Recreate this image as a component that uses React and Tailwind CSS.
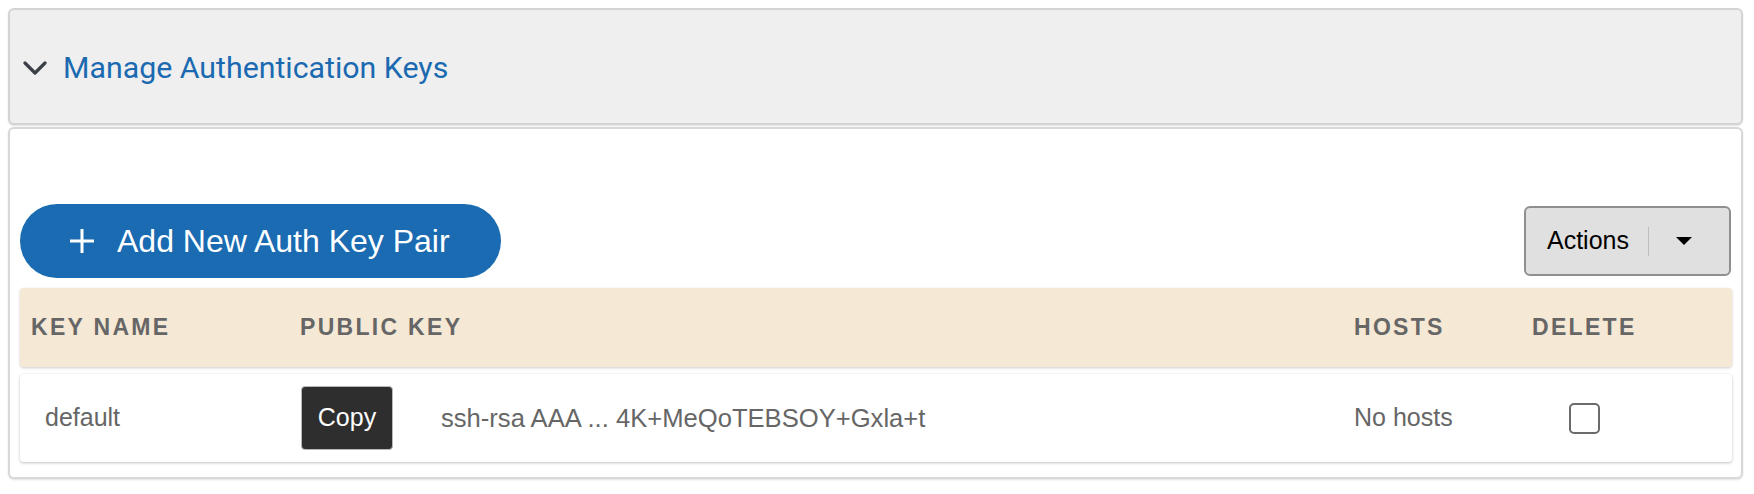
export default function App() {
    return (
        <div className="w-[1754px] h-[494px] bg-white pt-[8px] pl-[8px]" style={{ fontFamily: '"Liberation Sans", Arial, sans-serif' }}>
            {/* Accordion header */}
            <div className="w-[1735px] h-[117px] flex items-center rounded-md border-2 border-[#d4d4d4] bg-[#efefef] shadow-[0_1px_2px_rgba(0,0,0,0.12)]">
                <svg width="24" height="15" viewBox="0 0 24 15" className="ml-[13px] mt-[4px]">
                    <path d="M2 2l10 10L22 2" fill="none" stroke="#3b4046" strokeWidth="3.2" strokeLinecap="round" strokeLinejoin="round" />
                </svg>
                <span className="ml-[16px] mt-[2px] text-[30.3px] text-[#1b6ab1]" style={{ fontFamily: 'Roboto, sans-serif' }}>
                    Manage Authentication Keys
                </span>
            </div>

            {/* Accordion body */}
            <div className="w-[1735px] h-[352px] mt-[2px] rounded-md border-2 border-[#d8d8d8] bg-white shadow-[0_1px_2px_rgba(0,0,0,0.12)] pl-[10px] pr-[9px] pt-[75px]">
                <div className="flex items-center justify-between">
                    <button className="h-[74px] w-[481px] rounded-full bg-[#1a6bb1] flex items-center pl-[50px] text-white text-[32px]">
                        <svg width="24" height="24" viewBox="0 0 24 24" className="mr-[23px]">
                            <path d="M12 0v24M0 12h24" stroke="white" strokeWidth="3" />
                        </svg>
                        Add New Auth Key Pair
                    </button>
                    <button className="h-[70px] w-[207px] mr-px rounded-md border-2 border-[#8f8f8f] bg-[#e0e0e0] flex items-center pl-[21px] text-[25px] text-black">
                        Actions
                        <span className="ml-[19px] w-px h-[29px] bg-[#bdbdbd]" />
                        <svg width="16" height="8" viewBox="0 0 16 8" className="ml-[27px]">
                            <path d="M0 0h16L8 8z" fill="black" />
                        </svg>
                    </button>
                </div>

                {/* Table header */}
                <div className="mt-[10px] h-[79px] flex items-center rounded-sm bg-[#f5e8d5] shadow-[0_1px_3px_rgba(0,0,0,0.2)] pl-[11px] text-[23px] font-bold tracking-[2.3px] text-[#666666]">
                    <div className="w-[269px]">KEY NAME</div>
                    <div className="flex-1">PUBLIC KEY</div>
                    <div className="w-[178px]">HOSTS</div>
                    <div className="w-[200px]">DELETE</div>
                </div>

                {/* Data row */}
                <div className="mt-[7px] h-[88px] flex items-center rounded-sm bg-white shadow-[0_1px_3px_rgba(0,0,0,0.25)] pl-[25px] text-[25px] text-[#666666]">
                    <div className="w-[256px]">default</div>
                    <div className="flex-1 flex items-center">
                        <button className="w-[92px] h-[64px] rounded-[4px] border-[1.5px] border-[#b8b8b8] bg-[#2e2e2e] text-white text-[25px] flex items-center justify-center">
                            Copy
                        </button>
                        <span className="ml-[48px] text-[25.6px]">ssh-rsa AAA ... 4K+MeQoTEBSOY+Gxla+t</span>
                    </div>
                    <div className="w-[215px]">No hosts</div>
                    <div className="w-[163px]">
                        <input type="checkbox" className="appearance-none block w-[31px] h-[31px] rounded-[5px] border-2 border-[#6b6b6b] bg-white" />
                    </div>
                </div>
            </div>
        </div>
    );
}
